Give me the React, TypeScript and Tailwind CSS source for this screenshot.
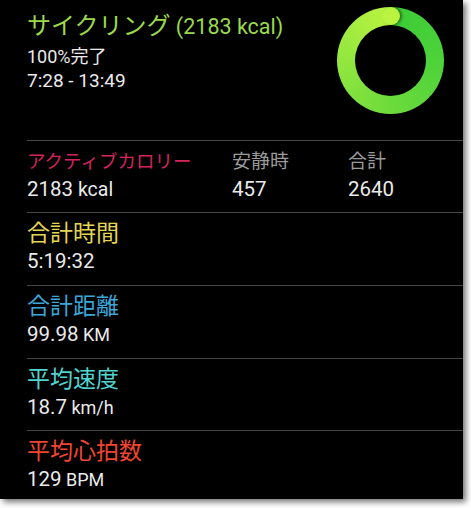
import React from "react";

const CJK = "font-['Noto_Sans_CJK_JP']";

function Row({
  label,
  color,
  value,
  unit,
  h,
}: {
  label: string;
  color: string;
  value: string;
  unit?: string;
  h: string;
}) {
  return (
    <div className={`ml-[27px] border-t border-[#474747] pt-[4px] ${h}`}>
      <div className={`${CJK} text-[23px] leading-[28px] ${color}`}>{label}</div>
      <div className="mt-[4px] text-[20.5px] leading-[24px] text-[#eaeaea]">
        {value}
        {unit && <span className="text-[18px]"> {unit}</span>}
      </div>
    </div>
  );
}

export default function App() {
  return (
    <div className="min-h-[508px] w-[471px] bg-white font-normal [font-family:Roboto,'Noto_Sans_CJK_JP',sans-serif]">
      <div className="flex h-[499px] w-[463px] flex-col overflow-hidden bg-black shadow-[3px_3px_6px_rgba(0,0,0,0.55)]">
        {/* Header */}
        <div className="flex h-[140px] shrink-0">
          <div className="flex-1 pl-[27px] pt-[9px]">
            <div className="leading-[30px] text-[#9ad94c] whitespace-nowrap">
              <span className={`${CJK} text-[24px]`}>サイクリング</span>
              <span className="text-[21.5px]"> (2183 kcal)</span>
            </div>
            <div className="leading-[22px] text-[#eaeaea]">
              <span className="text-[18px]">100%</span>
              <span className={`${CJK} text-[18px]`}>完了</span>
            </div>
            <div className="leading-[23px] text-[19px] text-[#eaeaea]">7:28 - 13:49</div>
          </div>
          <div className="relative mr-[19px] mt-[7px] flex h-[107px] w-[107px] items-center justify-center rounded-full bg-[conic-gradient(from_0deg,#3acb36,#52d43a_30%,#74dd3c_55%,#9ae93f_80%,#baf340)]">
            <div className="h-[71px] w-[71px] rounded-full bg-black" />
            <div className="absolute left-1/2 top-0 h-[18px] w-[18px] -translate-x-1/2 rounded-full bg-[#baf340] shadow-[2px_0_3px_rgba(0,0,0,0.45)]" />
          </div>
        </div>

        {/* Calories row */}
        <div className="ml-[27px] flex h-[72px] shrink-0 border-t border-[#474747] pt-[7px]">
          <div className="w-[205px]">
            <div className={`${CJK} text-[18.5px] leading-[24px] text-[#d1245b]`}>アクティブカロリー</div>
            <div className="mt-[5px] text-[20.5px] leading-[24px] text-[#eaeaea]">
              2183<span className="text-[19.5px]"> kcal</span>
            </div>
          </div>
          <div className="w-[116px]">
            <div className={`${CJK} text-[19px] leading-[24px] text-[#9a9a9a]`}>安静時</div>
            <div className="mt-[5px] text-[20.5px] leading-[24px] text-[#eaeaea]">457</div>
          </div>
          <div>
            <div className={`${CJK} text-[19px] leading-[24px] text-[#9a9a9a]`}>合計</div>
            <div className="mt-[5px] text-[20.5px] leading-[24px] text-[#eaeaea]">2640</div>
          </div>
        </div>

        <Row label="合計時間" color="text-[#e4d655]" value="5:19:32" h="h-[73px] shrink-0" />
        <Row label="合計距離" color="text-[#3ba6d8]" value="99.98" unit="KM" h="h-[73px] shrink-0" />
        <Row label="平均速度" color="text-[#4fd4cf]" value="18.7" unit="km/h" h="h-[72px] shrink-0" />
        <Row label="平均心拍数" color="text-[#ef4631]" value="129" unit="BPM" h="flex-1" />
      </div>
    </div>
  );
}
